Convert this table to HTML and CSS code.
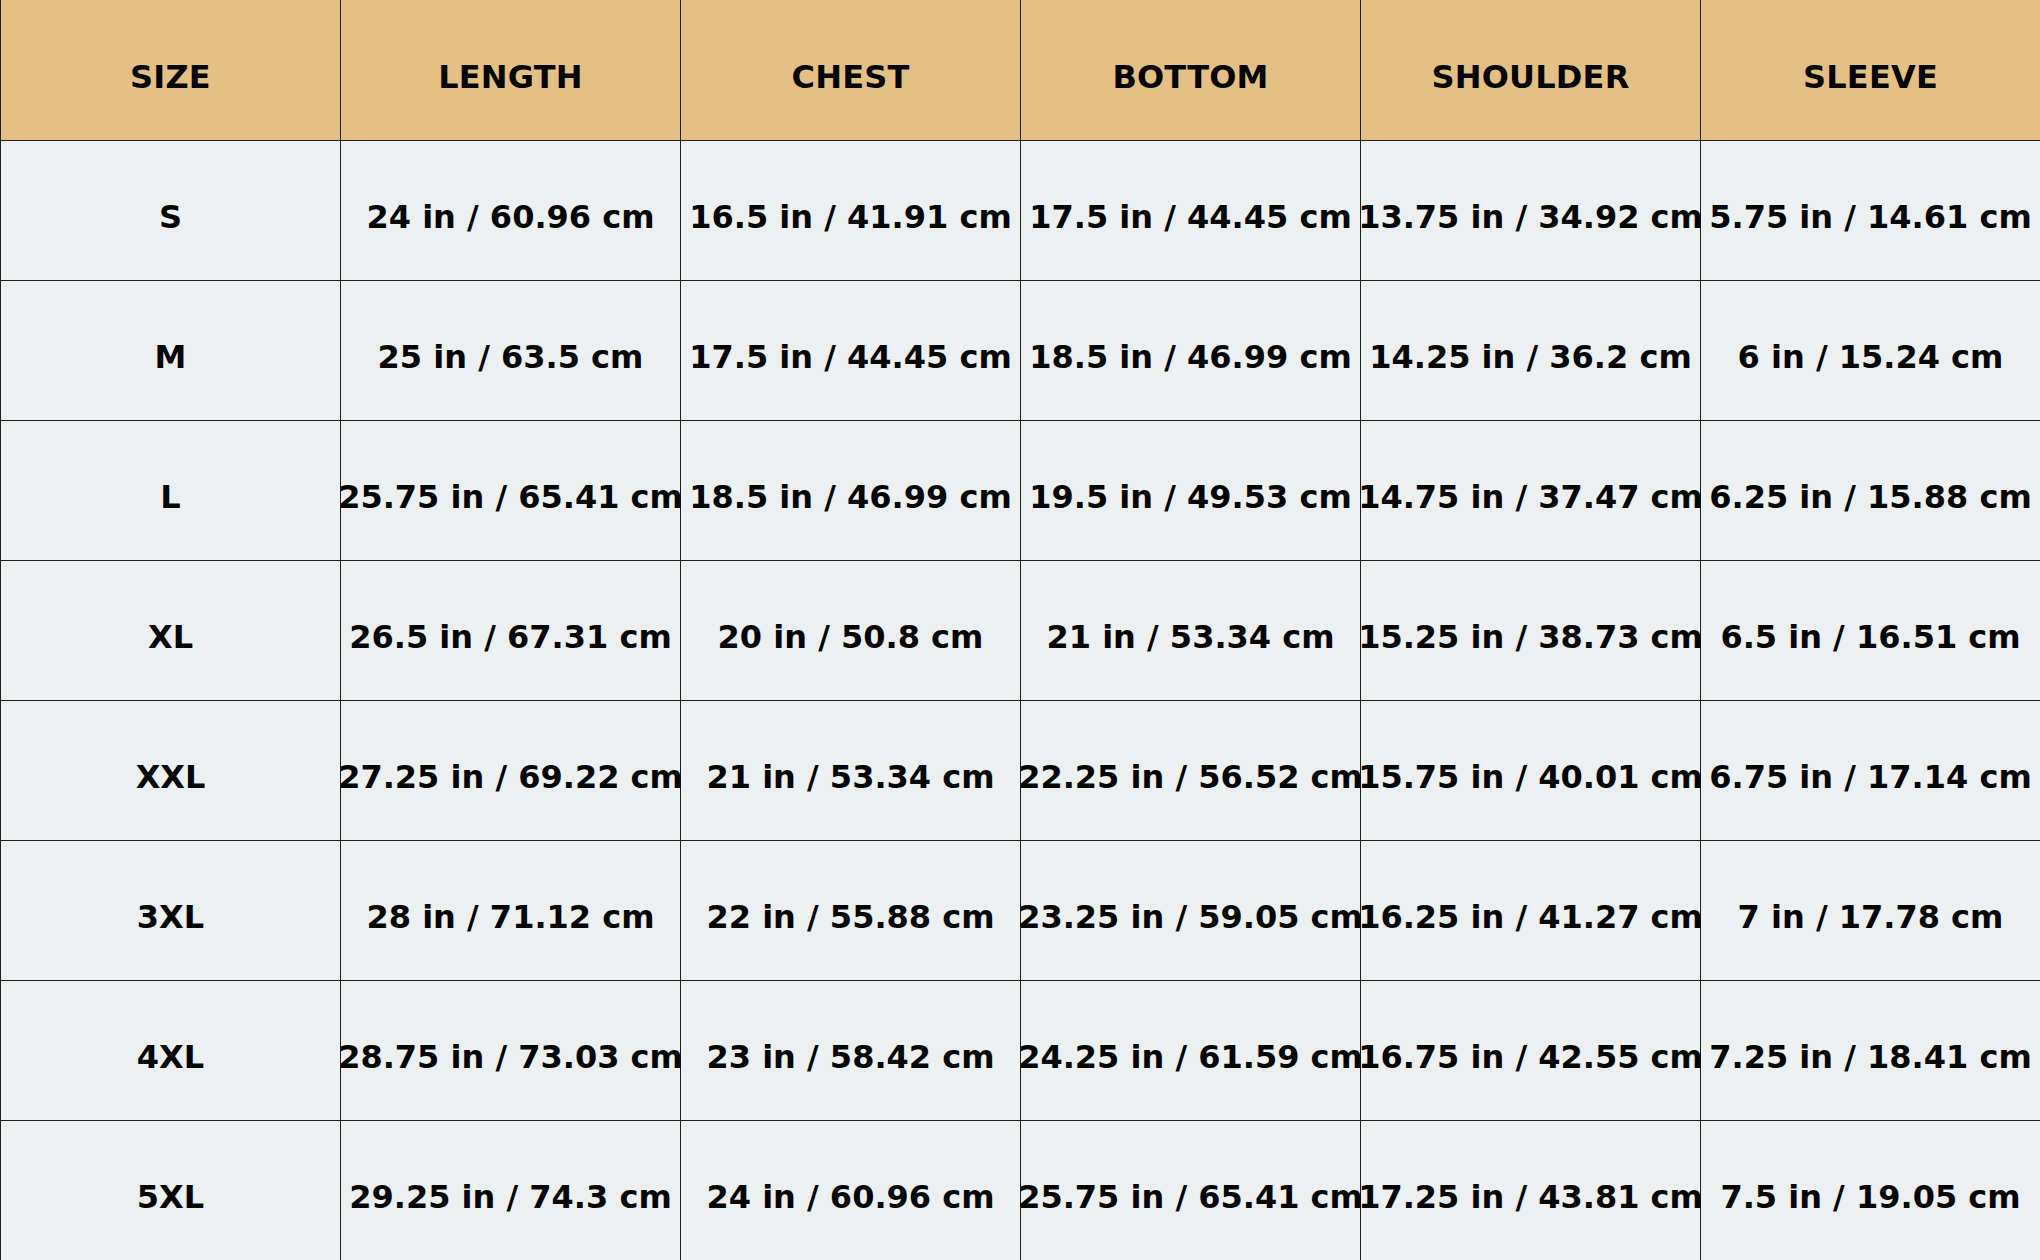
FILE: index.html
```html
<!DOCTYPE html>
<html lang="en">
<head>
<meta charset="utf-8">
<title>Size Chart</title>
<link rel="stylesheet" href="styles.css">
</head>
<body>
<table class="chart">
  <colgroup>
    <col class="col"><col class="col"><col class="col"><col class="col"><col class="col"><col class="col">
  </colgroup>
  <thead>
    <tr class="head-row">
      <th><span class="txt">SIZE</span></th>
      <th><span class="txt">LENGTH</span></th>
      <th><span class="txt">CHEST</span></th>
      <th><span class="txt">BOTTOM</span></th>
      <th><span class="txt">SHOULDER</span></th>
      <th><span class="txt">SLEEVE</span></th>
    </tr>
  </thead>
  <tbody>
    <tr><td><span class="txt">S</span></td><td><span class="txt">24 in / 60.96 cm</span></td><td><span class="txt">16.5 in / 41.91 cm</span></td><td><span class="txt">17.5 in / 44.45 cm</span></td><td><span class="txt">13.75 in / 34.92 cm</span></td><td><span class="txt">5.75 in / 14.61 cm</span></td></tr>
    <tr><td><span class="txt">M</span></td><td><span class="txt">25 in / 63.5 cm</span></td><td><span class="txt">17.5 in / 44.45 cm</span></td><td><span class="txt">18.5 in / 46.99 cm</span></td><td><span class="txt">14.25 in / 36.2 cm</span></td><td><span class="txt">6 in / 15.24 cm</span></td></tr>
    <tr><td><span class="txt">L</span></td><td><span class="txt">25.75 in / 65.41 cm</span></td><td><span class="txt">18.5 in / 46.99 cm</span></td><td><span class="txt">19.5 in / 49.53 cm</span></td><td><span class="txt">14.75 in / 37.47 cm</span></td><td><span class="txt">6.25 in / 15.88 cm</span></td></tr>
    <tr><td><span class="txt">XL</span></td><td><span class="txt">26.5 in / 67.31 cm</span></td><td><span class="txt">20 in / 50.8 cm</span></td><td><span class="txt">21 in / 53.34 cm</span></td><td><span class="txt">15.25 in / 38.73 cm</span></td><td><span class="txt">6.5 in / 16.51 cm</span></td></tr>
    <tr><td><span class="txt">XXL</span></td><td><span class="txt">27.25 in / 69.22 cm</span></td><td><span class="txt">21 in / 53.34 cm</span></td><td><span class="txt">22.25 in / 56.52 cm</span></td><td><span class="txt">15.75 in / 40.01 cm</span></td><td><span class="txt">6.75 in / 17.14 cm</span></td></tr>
    <tr><td><span class="txt">3XL</span></td><td><span class="txt">28 in / 71.12 cm</span></td><td><span class="txt">22 in / 55.88 cm</span></td><td><span class="txt">23.25 in / 59.05 cm</span></td><td><span class="txt">16.25 in / 41.27 cm</span></td><td><span class="txt">7 in / 17.78 cm</span></td></tr>
    <tr><td><span class="txt">4XL</span></td><td><span class="txt">28.75 in / 73.03 cm</span></td><td><span class="txt">23 in / 58.42 cm</span></td><td><span class="txt">24.25 in / 61.59 cm</span></td><td><span class="txt">16.75 in / 42.55 cm</span></td><td><span class="txt">7.25 in / 18.41 cm</span></td></tr>
    <tr><td><span class="txt">5XL</span></td><td><span class="txt">29.25 in / 74.3 cm</span></td><td><span class="txt">24 in / 60.96 cm</span></td><td><span class="txt">25.75 in / 65.41 cm</span></td><td><span class="txt">17.25 in / 43.81 cm</span></td><td><span class="txt">7.5 in / 19.05 cm</span></td></tr>
  </tbody>
</table>
</body>
</html>
```
FILE: styles.css
```css
html, body {
  margin: 0;
  padding: 0;
  background: #ecf0f1;
  overflow: hidden;
}

.chart {
  width: 2040px;
  table-layout: fixed;
  border-collapse: separate;
  border-spacing: 0;
  font-family: "DejaVu Sans", "Liberation Sans", sans-serif;
  font-weight: bold;
  font-size: 32px;
  color: #050505;
}

.col {
  width: 340px;
}

.chart th,
.chart td {
  height: 140px;
  box-sizing: border-box;
  padding: 12px 0 0 0;
  text-align: center;
  vertical-align: middle;
  white-space: nowrap;
  border-left: 1px solid #1e1e1e;
  border-top: 1px solid #1e1e1e;
}

.head-row th {
  background: #e4c087;
  border-top: none;
  padding-top: 14px;
  letter-spacing: 0.2px;
}

.chart td {
  background: #ecf0f1;
}

.txt {
  display: inline-block;
  margin: 0 -40px;
}
```
